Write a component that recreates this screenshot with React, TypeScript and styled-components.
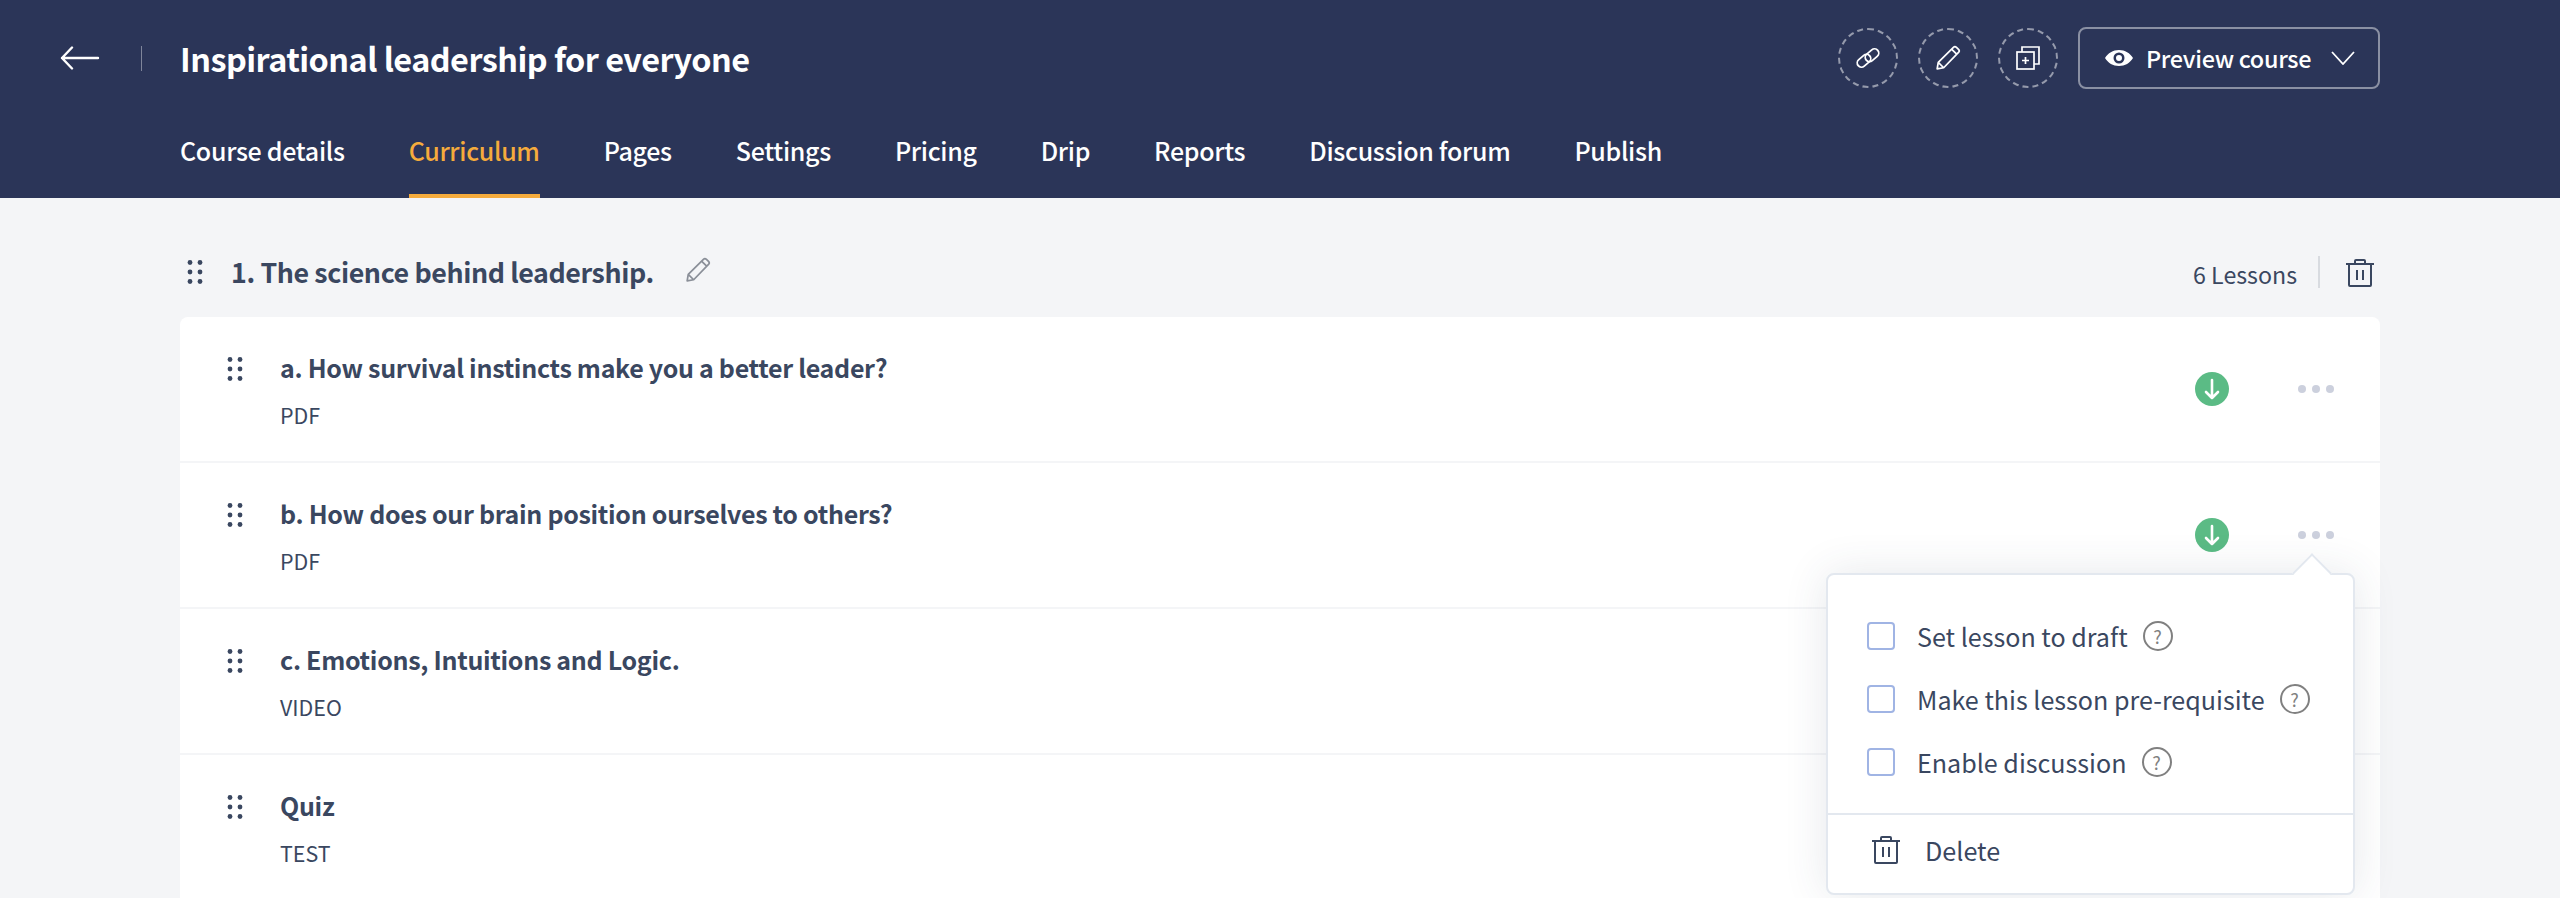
import React from 'react';
import styled, { createGlobalStyle } from 'styled-components';

const GlobalStyle = createGlobalStyle`
	html, body {
		margin: 0;
		height: 898px;
		overflow: hidden;
		background: #f4f5f7;
		font-family: "Noto Sans CJK SC", "Noto Sans", sans-serif;
		color: #3a4760;
	}
	* { box-sizing: border-box; }
`;

const Header = styled.header`
	height: 198px;
	background: #2b3558;
	display: flex;
	flex-direction: column;
`;
const TopBar = styled.div`
	display: flex;
	align-items: center;
	height: 62px;
	margin-top: 27px;
	padding: 0 180px 0 60px;
`;
const BackDivider = styled.span`
	width: 1px;
	height: 25px;
	margin: 0 38px 0 41px;
	background: rgba(255, 255, 255, 0.4);
`;
const CourseTitle = styled.h1`
	margin: 0;
	font-size: 32.4px;
	letter-spacing: -0.53px;
	line-height: 48px;
	font-weight: 600;
	color: #fff;
`;
const Actions = styled.div`
	margin-left: auto;
	display: flex;
	align-items: center;
	gap: 20px;
`;
const CircleButton = styled.button`
	width: 60px;
	height: 60px;
	padding: 0;
	border: 2px dashed rgba(255, 255, 255, 0.5);
	border-radius: 50%;
	background: none;
	display: flex;
	align-items: center;
	justify-content: center;
`;
const PreviewButton = styled.button`
	width: 302px;
	height: 62px;
	padding: 0 23px 0 25px;
	border: 2px solid rgba(255, 255, 255, 0.45);
	border-radius: 8px;
	background: none;
	display: flex;
	align-items: center;
	color: #fff;
	font-family: inherit;
	font-size: 23.4px;
	letter-spacing: -0.3px;
	font-weight: 500;
	white-space: nowrap;
`;
const PreviewLabel = styled.span`
	margin-left: 13px;
	flex: 1;
	text-align: left;
`;
const Nav = styled.nav`
	margin-top: auto;
	padding-left: 180px;
	display: flex;
	gap: 64px;
`;
const Tab = styled.a<{ $active?: boolean }>`
	height: 71px;
	border-bottom: 4px solid ${props => (props.$active ? '#f5ab3c' : 'transparent')};
	color: ${props => (props.$active ? '#f5ab3c' : '#fff')};
	font-size: 25px;
	letter-spacing: -0.3px;
	line-height: 40px;
	font-weight: 500;
	padding-top: 3px;
`;
const Content = styled.main`
	padding: 0 180px;
`;
const SectionHead = styled.div`
	height: 119px;
	display: flex;
	align-items: center;
	padding: 28px 5px 0 7px;
`;
const SectionTitle = styled.h2`
	margin: 0 31px 0 28px;
	font-size: 26.8px;
	letter-spacing: -0.4px;
	line-height: 40px;
	font-weight: 600;
`;
const EditGlyph = styled.span`
	display: flex;
	margin-top: -3px;
`;
const LessonCount = styled.span`
	margin-left: auto;
	margin-top: 5px;
	font-size: 23.2px;
	line-height: 32px;
`;
const HeadDivider = styled.span`
	width: 2px;
	height: 32px;
	margin: 0 25px 0 21px;
	background: #d8dbe0;
`;
const HeadTrash = styled.span`
	display: flex;
	margin-top: 2px;
`;
const Card = styled.section`
	position: relative;
	background: #fff;
	border-radius: 8px 8px 0 0;
`;
const Row = styled.div`
	position: relative;
	height: 146px;
	display: flex;
	align-items: flex-start;
	padding: 40px 46px 0 47px;
	border-bottom: 2px solid #f4f5f7;
`;
const LessonText = styled.div`
	margin-left: 37px;
`;
const LessonTitle = styled.div`
	font-size: 25px;
	letter-spacing: -0.3px;
	line-height: 40px;
	margin-top: -10px;
	font-weight: 600;
`;
const LessonType = styled.div`
	margin-top: 12px;
	font-size: 21.4px;
	line-height: 32px;
`;
const RowActions = styled.div`
	margin-left: auto;
	margin-top: 15px;
	display: flex;
	align-items: center;
	gap: 69px;
`;
const StatusDot = styled.span`
	width: 34px;
	height: 34px;
	border-radius: 50%;
	background: #5bbb85;
	display: flex;
	align-items: center;
	justify-content: center;
`;
const More = styled.span`
	display: flex;
	gap: 6px;
`;
const MoreDot = styled.i`
	width: 8px;
	height: 8px;
	border-radius: 50%;
	background: #ccd0dd;
`;
const Popup = styled.div`
	position: absolute;
	top: 110px;
	right: 25px;
	width: 529px;
	height: 322px;
	z-index: 2;
	background: #fff;
	border: 2px solid #e3e8ef;
	border-radius: 8px;
	box-shadow: 0 0 44px rgba(53, 66, 92, 0.12);
	&::before {
		content: '';
		position: absolute;
		top: -16px;
		right: 27px;
		width: 26px;
		height: 26px;
		background: #fff;
		border-top: 2px solid #e3e8ef;
		border-left: 2px solid #e3e8ef;
		transform: rotate(45deg);
	}
`;
const Options = styled.div`
	height: 240px;
	padding: 47px 0 0 39px;
	display: flex;
	flex-direction: column;
	gap: 35px;
	border-bottom: 2px solid #e3e8ef;
`;
const Option = styled.label`
	display: flex;
	align-items: center;
	height: 28px;
	font-size: 25.1px;
`;
const CheckBox = styled.span`
	width: 28px;
	height: 28px;
	border: 2px solid #a0b4e4;
	border-radius: 4px;
	margin-right: 22px;
`;
const Hint = styled.span`
	width: 30px;
	height: 30px;
	margin-left: 15px;
	border: 2px solid #808080;
	border-radius: 50%;
	color: #808080;
	font-size: 18px;
	line-height: 26px;
	text-align: center;
`;
const DeleteRow = styled.div`
	display: flex;
	align-items: center;
	height: 70px;
	padding-left: 43px;
	font-size: 25.2px;
	gap: 24px;
`;

const Grip = () => (
	<svg width="16" height="24" viewBox="0 0 16 24" fill="#3a4760">
		{[2.5, 12, 21.5].map(y => (
			<React.Fragment key={y}>
				<circle cx="3" cy={y} r="2.4" />
				<circle cx="13" cy={y} r="2.4" />
			</React.Fragment>
		))}
	</svg>
);

const TrashIcon = () => (
	<svg width="30" height="28" viewBox="0 0 30 28" fill="none" stroke="#3a4760" strokeWidth="2">
		<path d="M1 5h28M10 5V2a1 1 0 0 1 1-1h8a1 1 0 0 1 1 1v3M4 5v21a1 1 0 0 0 1 1h20a1 1 0 0 0 1-1V5M12 11v10M18 11v10" />
	</svg>
);

const PencilIcon = ({ color, size }: { color: string; size: number }) => (
	<svg width={size} height={size} viewBox="0 0 24 24" fill="none" stroke={color} strokeWidth="1.6" strokeLinejoin="round">
		<path d="M2 22l1-6L17 2.2a2 2 0 0 1 2.8 0l1.900 1.900a2 2 0 0 1 0 2.800L8 21zM3 16l5 5M15.500 4l4.500 4.500" />
	</svg>
);

const LinkIcon = () => (
	<svg width="26" height="22" viewBox="0 0 26 22" fill="none" stroke="#fff" strokeWidth="1.8">
		<rect x="1.5" y="9.5" width="15" height="8.5" rx="4.25" transform="rotate(-40 9 13.75)" />
		<rect x="9.5" y="4" width="15" height="8.5" rx="4.25" transform="rotate(-40 17 8.25)" />
	</svg>
);

const CopyIcon = () => (
	<svg width="24" height="24" viewBox="0 0 24 24" fill="none" stroke="#fff" strokeWidth="1.7">
		<rect x="1" y="6" width="17" height="17" />
		<path d="M6 6V1h17v17h-5M9.500 11v7M6 14.500h7" />
	</svg>
);

const EyeIcon = () => (
	<svg width="28" height="16" viewBox="0 0 28 16" fill="#fff">
		<path fillRule="evenodd" d="M0 8C3 3 8 0 14 0s11 3 14 8c-3 5-8 8-14 8S3 13 0 8zm14-5.500a5.500 5.500 0 1 0 0 11 5.500 5.500 0 0 0 0-11zm0 2.500a3 3 0 1 1 0 6 3 3 0 0 1 0-6z" />
	</svg>
);

const BackIcon = () => (
	<svg width="40" height="24" viewBox="0 0 40 24" fill="none" stroke="#fff" strokeWidth="2.4" strokeLinecap="round" strokeLinejoin="round">
		<path d="M38 12H2M12 1.500L2 12l10 10.500" />
	</svg>
);

const CaretIcon = () => (
	<svg width="24" height="14" viewBox="0 0 24 14" fill="none" stroke="#fff" strokeWidth="1.8">
		<path d="M1 1l11 12L23 1" />
	</svg>
);

const DownIcon = () => (
	<svg width="16" height="22" viewBox="0 0 16 22" fill="none" stroke="#fff" strokeWidth="2.6" strokeLinecap="round" strokeLinejoin="round">
		<path d="M8 2v18M2 14l6 6 6-6" />
	</svg>
);

const tabs = ['Course details', 'Curriculum', 'Pages', 'Settings', 'Pricing', 'Drip', 'Reports', 'Discussion forum', 'Publish'];

const lessons = [
	{ title: 'a. How survival instincts make you a better leader?', type: 'PDF', status: true },
	{ title: 'b. How does our brain position ourselves to others?', type: 'PDF', status: true, open: true },
	{ title: 'c. Emotions, Intuitions and Logic.', type: 'VIDEO' },
	{ title: 'Quiz', type: 'TEST' }
];

const options = ['Set lesson to draft', 'Make this lesson pre-requisite', 'Enable discussion'];

export default function App() {
	return (
		<>
			<GlobalStyle />
			<Header>
				<TopBar>
					<BackIcon />
					<BackDivider />
					<CourseTitle>Inspirational leadership for everyone</CourseTitle>
					<Actions>
						<CircleButton><LinkIcon /></CircleButton>
						<CircleButton><PencilIcon color="#fff" size={26} /></CircleButton>
						<CircleButton><CopyIcon /></CircleButton>
						<PreviewButton>
							<EyeIcon />
							<PreviewLabel>Preview course</PreviewLabel>
							<CaretIcon />
						</PreviewButton>
					</Actions>
				</TopBar>
				<Nav>
					{tabs.map(tab => (
						<Tab key={tab} $active={tab === 'Curriculum'}>{tab}</Tab>
					))}
				</Nav>
			</Header>
			<Content>
				<SectionHead>
					<Grip />
					<SectionTitle>1. The science behind leadership.</SectionTitle>
					<EditGlyph><PencilIcon color="#8a8f98" size={26} /></EditGlyph>
					<LessonCount>6 Lessons</LessonCount>
					<HeadDivider />
					<HeadTrash><TrashIcon /></HeadTrash>
				</SectionHead>
				<Card>
					{lessons.map(lesson => (
						<Row key={lesson.title}>
							<Grip />
							<LessonText>
								<LessonTitle>{lesson.title}</LessonTitle>
								<LessonType>{lesson.type}</LessonType>
							</LessonText>
							{lesson.status && (
								<RowActions>
									<StatusDot><DownIcon /></StatusDot>
									<More><MoreDot /><MoreDot /><MoreDot /></More>
								</RowActions>
							)}
							{lesson.open && (
								<Popup>
									<Options>
										{options.map(option => (
											<Option key={option}>
												<CheckBox />
												{option}
												<Hint>?</Hint>
											</Option>
										))}
									</Options>
									<DeleteRow>
										<TrashIcon />
										Delete
									</DeleteRow>
								</Popup>
							)}
						</Row>
					))}
				</Card>
			</Content>
		</>
	);
}
